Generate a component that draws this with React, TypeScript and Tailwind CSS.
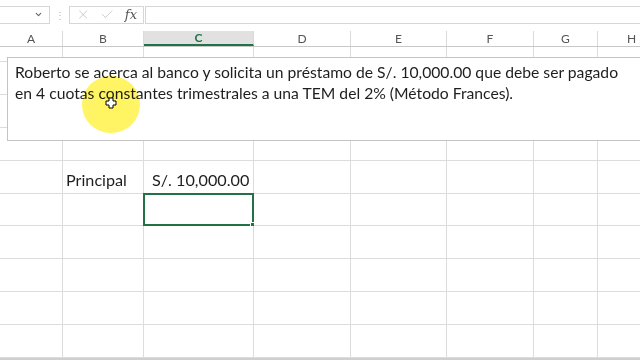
import React from 'react';
import { X, Check, ChevronDown } from 'lucide-react';

const cols = [
  { name: 'A', w: 63 },
  { name: 'B', w: 81 },
  { name: 'C', w: 110 },
  { name: 'D', w: 97 },
  { name: 'E', w: 96 },
  { name: 'F', w: 87 },
  { name: 'G', w: 64 },
  { name: 'H', w: 68 },
];

const rows = [15, 33, 33, 33, 33, 32, 33, 33, 33, 33];

const Cell = ({ w, h, children, selected }: { w: number; h: number; children?: React.ReactNode; selected?: boolean }) => (
  <div
    className="relative shrink-0 border-r border-b border-[#dcdcdc] flex items-end pb-[1px] text-[16.2px] text-[#1e1e1e]"
    style={{ width: w, height: h }}
  >
    {children}
    {selected && (
      <div className="absolute -left-px -top-px -right-px -bottom-px border-2 border-[#217346]">
        <div className="absolute -right-[3px] -bottom-[3px] w-[5px] h-[5px] bg-[#217346] border border-white" />
      </div>
    )}
  </div>
);

const App = () => {
  return (
    <div className="relative w-[640px] h-[360px] overflow-hidden bg-white font-['Lato','Liberation_Sans',sans-serif]">
      {/* formula bar */}
      <div className="flex items-center h-[31px] pt-[6px] pb-[8px] bg-white">
        <div className="flex items-center justify-end w-[50px] h-[18px] border border-[#d6d6d6] border-l-0 pr-[6px]">
          <ChevronDown size={9} strokeWidth={3} className="text-[#666]" />
        </div>
        <div className="w-[19px] flex justify-center text-[#b5b5b5] text-[10px] leading-none">⋮</div>
        <div className="flex items-center gap-[10px] h-[18px] w-[75px] border border-[#d6d6d6] px-[6px]">
          <X size={15} strokeWidth={1.3} className="text-[#bdbdbd]" />
          <Check size={15} strokeWidth={1.3} className="text-[#bdbdbd]" />
          <span className="font-['DejaVu_Serif',serif] italic text-[13px] text-[#555] leading-none">fx</span>
        </div>
        <div className="flex-1 h-[18px] border border-[#d6d6d6] border-r-0 ml-[1px]" />
      </div>

      {/* column headers */}
      <div className="flex h-[16px] border-b border-[#c8c8c8]">
        {cols.map((c) => (
          <div
            key={c.name}
            className={`shrink-0 flex items-center justify-center border-r border-[#dadada] text-[12px] text-[#555] ${c.name === 'C' ? 'bg-[#e1e1e1] border-b-2 border-b-[#217346] text-[#217346] font-bold' : ''}`}
            style={{ width: c.w }}
          >
            {c.name}
          </div>
        ))}
      </div>

      {/* grid */}
      <div className="flex flex-col">
        {rows.map((h, r) => (
          <div key={r} className="flex">
            {cols.map((c, ci) => (
              <Cell key={c.name} w={c.w} h={h} selected={r === 5 && ci === 2}>
                {r === 4 && ci === 1 && <span className="pl-[3px]">Principal</span>}
                {r === 4 && ci === 2 && <span className="pl-[8px] whitespace-nowrap">S/. 10,000.00</span>}
              </Cell>
            ))}
          </div>
        ))}
      </div>

      <div className="absolute left-0 right-0 bottom-0 h-[2px] bg-[#cfcfcf]" />

      {/* text box shape */}
      <div className="absolute left-[7px] top-[57px] w-[650px] h-[84px] bg-white border border-[#c4c4c4] pl-[7px] pt-[4px] text-[15.7px] leading-[21px] text-[#1e1e1e]">
        <div className="whitespace-nowrap">Roberto se acerca al banco y solicita un préstamo de S/. 10,000.00 que debe ser pagado</div>
        <div className="whitespace-nowrap">en 4 cuotas constantes trimestrales a una TEM del 2% (Método Frances).</div>
      </div>

      {/* cursor highlight */}
      <div className="absolute left-[82px] top-[76px] w-[58px] h-[57px] rounded-full bg-[radial-gradient(circle,rgba(255,240,40,0.75)_0%,rgba(255,240,40,0.7)_85%,rgba(255,240,40,0.2)_100%)] mix-blend-multiply" />
      <svg className="absolute left-[105px] top-[97px]" width="12" height="12" viewBox="0 0 12 12">
        <path d="M4 1h4v3h3v4H8v3H4V8H1V4h3z" fill="#fff" stroke="#000" strokeWidth="1" />
      </svg>
    </div>
  );
};

export default App;
